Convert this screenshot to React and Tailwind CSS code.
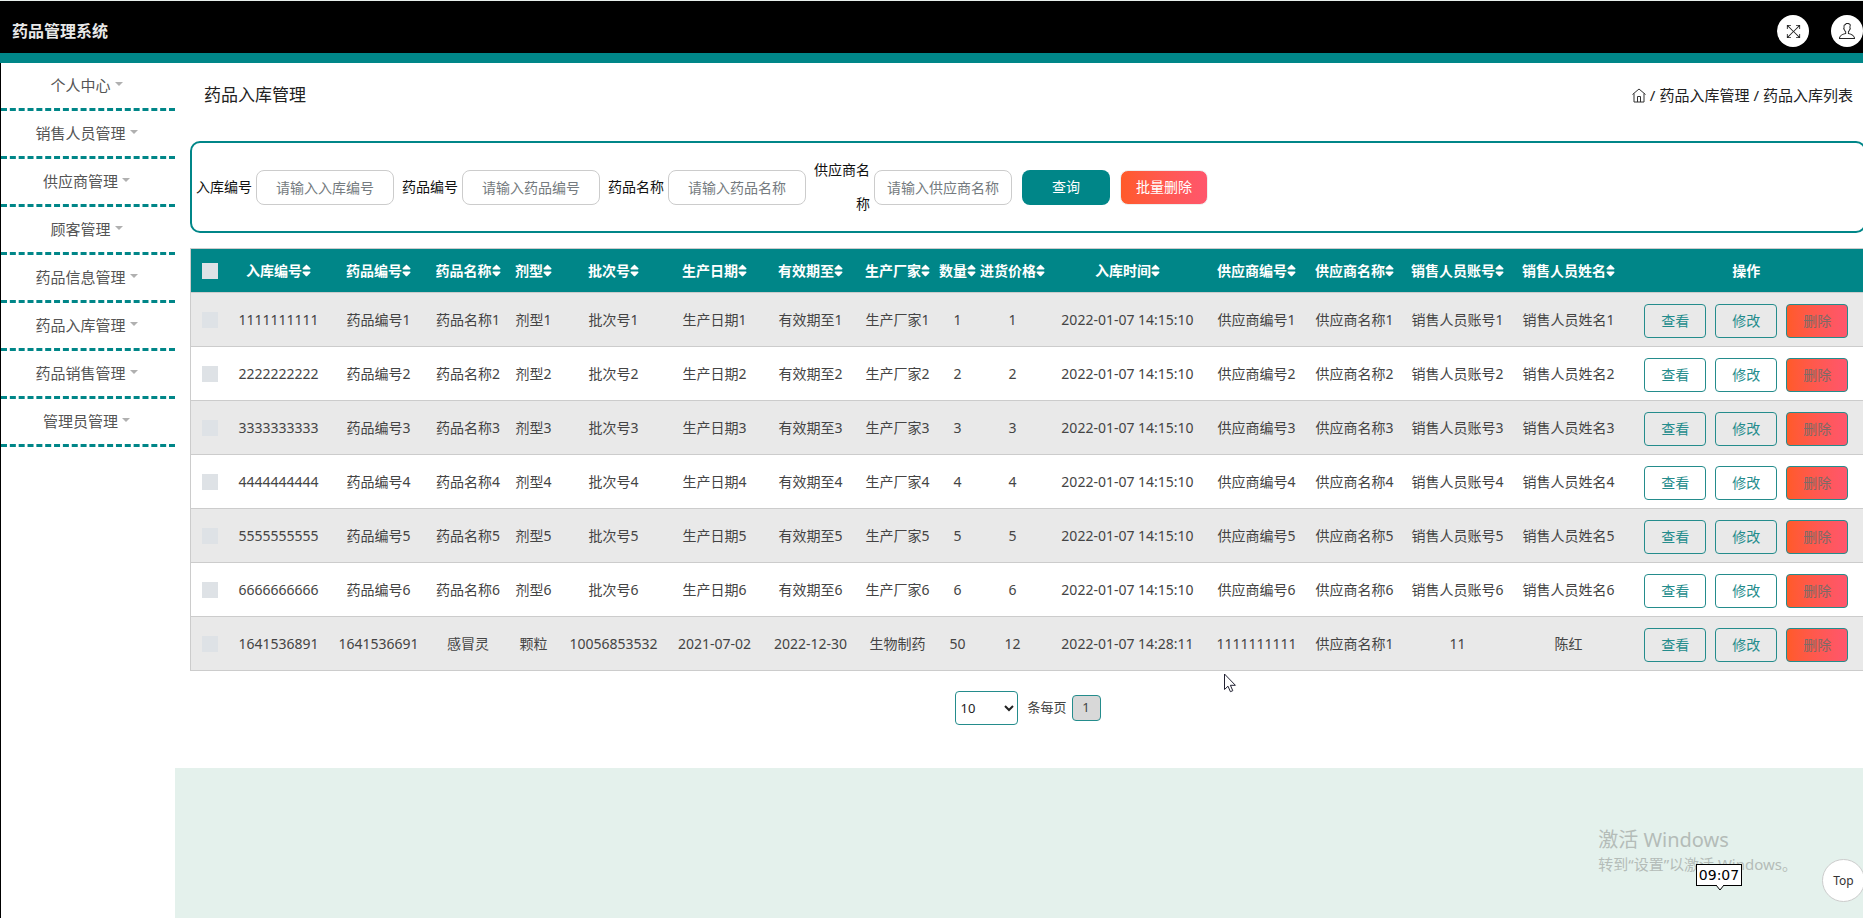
import React, { useState } from "react";
import { TfiFullscreen, TfiUser } from "react-icons/tfi";
import { FaSort } from "react-icons/fa";

const menus = [
  '个人中心',
  '销售人员管理',
  '供应商管理',
  '顾客管理',
  '药品信息管理',
  '药品入库管理',
  '药品销售管理',
  '管理员管理',
];

const fields = [
  { id: 'rukubianhao', name: '入库编号' },
  { id: 'yaopinbianhao', name: '药品编号' },
  { id: 'yaopinmingcheng', name: '药品名称' },
  { id: 'gongyingshang', name: '供应商名称' },
];

const columns = [
  { name: '入库编号', width: 'w-[100px]' },
  { name: '药品编号', width: 'w-[100px]' },
  { name: '药品名称', width: 'w-[79px]' },
  { name: '剂型', width: 'w-[52px]' },
  { name: '批次号', width: 'w-[108px]' },
  { name: '生产日期', width: 'w-[94px]' },
  { name: '有效期至', width: 'w-[98px]' },
  { name: '生产厂家', width: 'w-[76px]' },
  { name: '数量', width: 'w-[44px]' },
  { name: '进货价格', width: 'w-[66px]' },
  { name: '入库时间', width: 'w-[164px]' },
  { name: '供应商编号', width: 'w-[94px]' },
  { name: '供应商名称', width: 'w-[102px]' },
  { name: '销售人员账号', width: 'w-[104px]' },
  { name: '销售人员姓名', width: 'w-[118px]' },
];

const rows = [1, 2, 3, 4, 5, 6].map((n) => [
  String(n).repeat(10),
  `药品编号${n}`,
  `药品名称${n}`,
  `剂型${n}`,
  `批次号${n}`,
  `生产日期${n}`,
  `有效期至${n}`,
  `生产厂家${n}`,
  n,
  n,
  '2022-01-07 14:15:10',
  `供应商编号${n}`,
  `供应商名称${n}`,
  `销售人员账号${n}`,
  `销售人员姓名${n}`,
]);

rows.push([
  '1641536891',
  '1641536691',
  '感冒灵',
  '颗粒',
  '10056853532',
  '2021-07-02',
  '2022-12-30',
  '生物制药',
  50,
  12,
  '2022-01-07 14:28:11',
  '1111111111',
  '供应商名称1',
  '11',
  '陈红',
]);

const Header = () => (
  <header className="flex h-[63px] items-center justify-between border-t border-b-10 border-t-[#e8efec] border-b-[#008688] bg-black pt-2 pl-3">
    <h1 className="text-base font-bold text-[#e8e8e8]">药品管理系统</h1>
    <div className="flex gap-[22px]">
      <button aria-label="全屏" className="flex size-8 items-center justify-center rounded-full bg-white text-[#222]">
        <TfiFullscreen size={15} />
      </button>
      <button aria-label="个人中心" className="flex size-8 items-center justify-center rounded-full bg-white text-[#222]">
        <TfiUser size={16} />
      </button>
    </div>
  </header>
);

const Sidebar = () => (
  <nav className="w-[175px] shrink-0 border-l border-black bg-white">
    <ul>
      {menus.map((menu) => (
        <li key={menu} className="h-12 border-b-3 border-dashed border-[#008688]">
          <a href="#" className="flex h-full items-center justify-center gap-1 pr-[3px] text-[15px] text-[#555]">
            {menu}
            <svg className="mb-1" width="8" height="4" viewBox="0 0 8 4" fill="#b0b0b0">
              <path d="M0 0h8L4 4z" />
            </svg>
          </a>
        </li>
      ))}
    </ul>
  </nav>
);

const SearchForm = () => (
  <form className="mt-[34px] flex h-[92px] items-center gap-2 rounded-[10px] border-2 border-[#008688] pl-1 text-sm text-[#111]">
    {fields.map((field) => (
      <div key={field.id} className="flex items-center gap-1">
        <label htmlFor={field.id} className="w-14 text-right leading-[34px]">
          {field.name}
        </label>
        <input
          id={field.id}
          placeholder={`请输入${field.name}`}
          className="h-[35px] w-[138px] rounded-lg border border-[#ccc] text-center placeholder:text-[#757b80]"
        />
      </div>
    ))}
    <div className="ml-[2px] flex gap-[10px] text-white">
      <button type="button" className="h-[35px] w-[88px] rounded-lg bg-[#008688]">查询</button>
      <button type="button" className="h-[35px] w-[88px] rounded-lg border border-[#eee] bg-linear-to-r from-[#ff5a28] to-[#ff566c]">
        批量删除
      </button>
    </div>
  </form>
);

const DataTable = () => (
  <table className="mt-[15px] w-full table-fixed border border-[#ccc] text-center text-sm whitespace-nowrap text-[#444]">
    <thead>
      <tr className="h-11 bg-[#008688] text-white">
        <th className="w-[38px]">
          <input type="checkbox" aria-label="全选" className="mx-auto block size-4 appearance-none bg-[#dee2e6]" />
        </th>
        {columns.map((column) => (
          <th key={column.name} className={column.width}>
            <span className="inline-flex items-center">
              {column.name}
              <FaSort className="h-[15px] w-[9px]" preserveAspectRatio="none" />
            </span>
          </th>
        ))}
        <th>操作</th>
      </tr>
    </thead>
    <tbody>
      {rows.map((row) => (
        <tr key={row[0]} className="h-[54px] border-t border-[#ccc] odd:bg-[#e9e9e9]">
          <td>
            <input type="checkbox" aria-label={row[0]} className="mx-auto block size-4 appearance-none bg-[#dee2e6]" />
          </td>
          {row.map((cell, i) => (
            <td key={i}>{cell}</td>
          ))}
          <td>
            <div className="flex justify-center gap-[9px] pt-[2px] text-[#248c8c]">
              <button className="h-[34px] w-[62px] rounded border border-[#248c8c]">查看</button>
              <button className="h-[34px] w-[62px] rounded border border-[#248c8c]">修改</button>
              <button className="h-[34px] w-[62px] rounded border border-[#248c8c] bg-linear-to-r from-[#ff5a28] to-[#ff566c] text-[#7d6b66]">
                删除
              </button>
            </div>
          </td>
        </tr>
      ))}
    </tbody>
  </table>
);

const Pagination = () => {
  const [size, setSize] = useState('10');
  return (
    <div className="mt-5 flex items-center justify-center text-[13px] text-[#444]">
      <select
        id="pageSize"
        value={size}
        onChange={(e) => setSize(e.target.value)}
        className="h-[34px] w-[63px] rounded border border-[#248c8c] bg-white text-[#222]"
      >
        <option>10</option>
        <option>25</option>
        <option>50</option>
      </select>
      <label htmlFor="pageSize" className="ml-[9px]">条每页</label>
      <button className="ml-[5px] h-[26px] w-[29px] rounded border border-[#248c8c] bg-[#d8d8d8]">1</button>
    </div>
  );
};

const App = () => {
  return (
    <div className="relative flex min-h-screen flex-col overflow-hidden bg-[#e4f1ec] font-['Noto_Sans','Noto_Sans_CJK_SC',sans-serif]">
      <Header />
      <div className="flex grow">
        <Sidebar />
        <main className="min-w-0 grow">
          <div className="bg-white pb-[43px] pl-[15px]">
            <div className="flex items-center justify-between pt-5 pr-[10px] pl-[14px] text-[#222]">
              <h2 className="text-[17px] leading-6">药品入库管理</h2>
              <div className="flex items-center gap-1 text-[15px] leading-6">
                <a href="#" aria-label="首页">
                  <svg width="14" height="15" viewBox="0 0 14 15" fill="none" stroke="#333">
                    <path d="M.5 6.500 7 1 13.500 6.500M2 5.500v8.500h10V5.500M5.500 14V8.500h3V14" />
                  </svg>
                </a>
                <span>/</span>
                <a href="#">药品入库管理</a>
                <span>/</span>
                <span>药品入库列表</span>
              </div>
            </div>
            <div className="-mr-[3px]">
              <SearchForm />
              <DataTable />
              <Pagination />
            </div>
          </div>
        </main>
      </div>

      {/* 系统水印 */}
      <div className="pointer-events-none absolute right-[66px] bottom-[44px] text-[#b4bcb8]">
        <p className="text-xl leading-7">激活 Windows</p>
        <p className="text-[15px] leading-5">转到“设置”以激活 Windows。</p>
      </div>

      {/* 时间提示 */}
      <div className="absolute right-[121px] bottom-8 h-[22px] w-[46px] border border-black bg-white text-center font-['DejaVu_Sans',sans-serif] text-sm leading-5 text-black">
        09:07
        <svg className="absolute top-[20px] left-[19px]" width="8" height="6" viewBox="0 0 8 6">
          <path d="M0 0 4 5 8 0" fill="#fff" stroke="#000" />
        </svg>
      </div>

      <button className="absolute -right-[2px] bottom-4 size-[43px] rounded-full border border-[#ccc] bg-white text-xs text-[#333]">
        Top
      </button>

      {/* 鼠标指针 */}
      <svg className="pointer-events-none absolute top-[673px] left-[1224px]" width="13" height="20" viewBox="0 0 13 20">
        <path d="M.5 1v15.500l3.500-3.300 2.400 5.500 2.400-1-2.400-5.400h5z" fill="#fff" stroke="#223" />
      </svg>
    </div>
  );
};

export default App;
